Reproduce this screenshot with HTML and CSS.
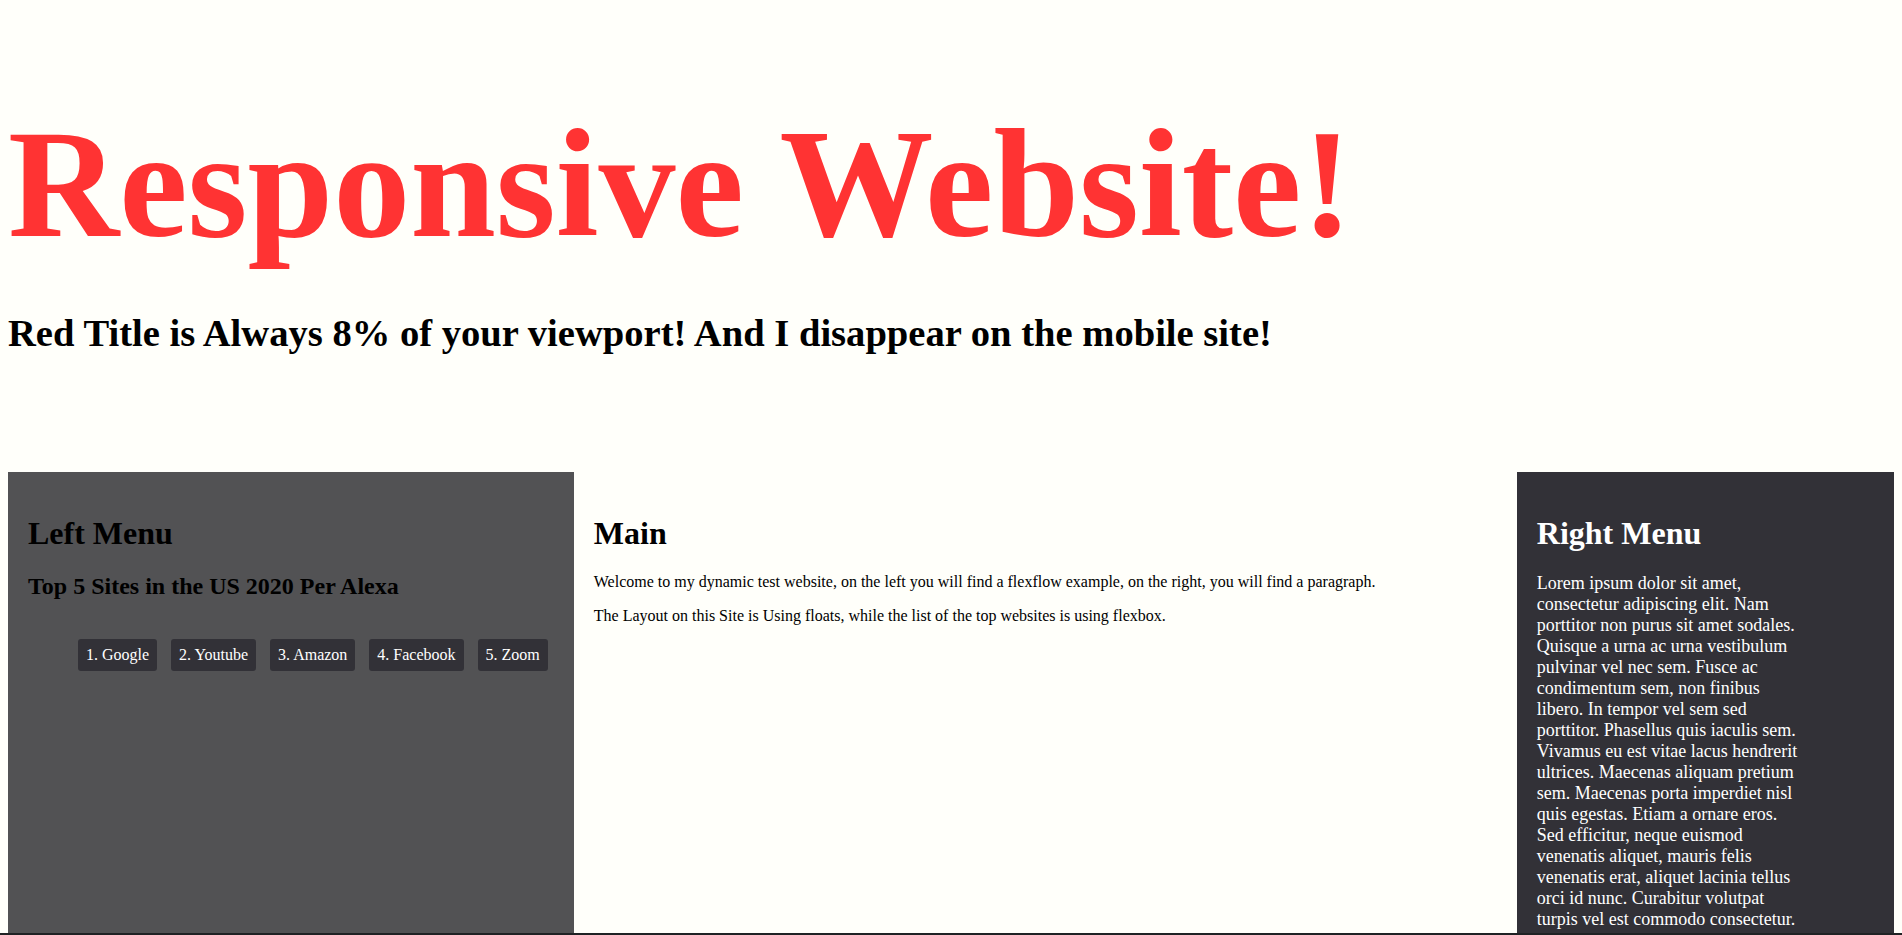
FILE: index.html
```html
<!DOCTYPE html>
<html lang="en">
<head>
<meta charset="utf-8">
<title>Responsive Website!</title>
<link rel="stylesheet" href="styles.css">
</head>
<body>
<header class="site-header">
  <h1 class="site-title">Responsive Website!</h1>
  <h2 class="site-subtitle">Red Title is Always 8% of your viewport! And I disappear on the mobile site!</h2>
</header>
<div class="columns">
  <nav class="panel panel-left">
    <h1 class="panel-title">Left Menu</h1>
    <h2 class="panel-subtitle">Top 5 Sites in the US 2020 Per Alexa</h2>
    <ul class="site-list">
      <li class="site-item">1. Google</li>
      <li class="site-item">2. Youtube</li>
      <li class="site-item">3. Amazon</li>
      <li class="site-item">4. Facebook</li>
      <li class="site-item">5. Zoom</li>
    </ul>
  </nav>
  <main class="panel panel-main">
    <h1 class="panel-title">Main</h1>
    <p class="main-text">Welcome to my dynamic test website, on the left you will find a flexflow example, on the right, you will find a paragraph.</p>
    <p class="main-text">The Layout on this Site is Using floats, while the list of the top websites is using flexbox.</p>
  </main>
  <aside class="panel panel-right">
    <h1 class="panel-title">Right Menu</h1>
    <p class="right-text">Lorem ipsum dolor sit amet, consectetur adipiscing elit. Nam porttitor non purus sit amet sodales. Quisque a urna ac urna vestibulum pulvinar vel nec sem. Fusce ac condimentum sem, non finibus libero. In tempor vel sem sed porttitor. Phasellus quis iaculis sem. Vivamus eu est vitae lacus hendrerit ultrices. Maecenas aliquam pretium sem. Maecenas porta imperdiet nisl quis egestas. Etiam a ornare eros. Sed efficitur, neque euismod venenatis aliquet, mauris felis venenatis erat, aliquet lacinia tellus orci id nunc. Curabitur volutpat turpis vel est commodo consectetur.</p>
  </aside>
</div>
<div class="screen-edge"></div>
</body>
</html>
```

FILE: styles.css
```css
html {
  background: #fffffa;
}

body {
  margin: 0 8px;
  padding-top: 1px;
  background: #fffffa;
  font-family: "Liberation Serif", "Times New Roman", serif;
  color: #000;
}

.site-header {
  padding-top: 95px;
}

.site-title {
  margin: 0;
  font-size: 154px;
  font-weight: bold;
  color: #ff3333;
}

.site-subtitle {
  margin: 38px 0 0;
  font-size: 38.6px;
  font-weight: bold;
}

.columns {
  display: flex;
  align-items: stretch;
  margin-top: 117px;
}

.panel {
  box-sizing: border-box;
  padding: 20px 20px 40px;
}

.panel-left {
  flex: 0 0 30%;
  background: #525254;
}

.panel-main {
  flex: 0 0 50%;
  background: #fffffa;
}

.panel-right {
  flex: 0 0 20%;
  background: #323137;
  color: #fff;
}

.panel-title {
  margin: 23px 0 21.44px;
  font-size: 32px;
  font-weight: bold;
}

.panel-subtitle {
  margin: 0;
  font-size: 24px;
  font-weight: bold;
}

.site-list {
  display: flex;
  gap: 14px;
  list-style: none;
  margin: 39px 0 0;
  padding: 0 0 0 50px;
}

.site-item {
  padding: 7px 8px;
  font-size: 16px;
  color: #fff;
  background: #323137;
  border-radius: 3px;
}

.main-text {
  margin: 16px 0;
  font-size: 16px;
}

.right-text {
  width: 80%;
  margin: 18px 0 0;
  font-size: 18px;
}

.screen-edge {
  position: fixed;
  left: 0;
  right: 0;
  bottom: 0;
  height: 2px;
  background: #1f2224;
}
```
